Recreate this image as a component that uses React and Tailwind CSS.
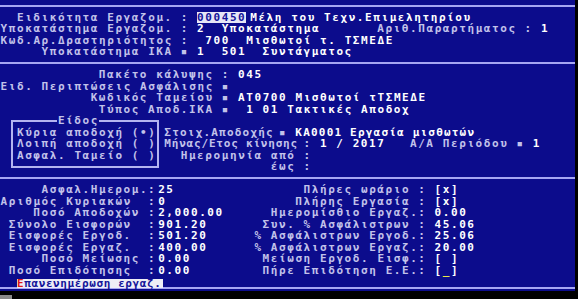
const L = "text-[#c2c2ea]";
const V = "text-white";
const BG = "bg-[#0c0c8c]";

const COL = [
  "col-start-1", "col-start-2", "col-start-3", "col-start-4", "col-start-5", "col-start-6", "col-start-7", "col-start-8", "col-start-9", "col-start-10",
  "col-start-11", "col-start-12", "col-start-13", "col-start-14", "col-start-15", "col-start-16", "col-start-17", "col-start-18", "col-start-19", "col-start-20",
  "col-start-21", "col-start-22", "col-start-23", "col-start-24", "col-start-25", "col-start-26", "col-start-27", "col-start-28", "col-start-29", "col-start-30",
  "col-start-31", "col-start-32", "col-start-33", "col-start-34", "col-start-35", "col-start-36", "col-start-37", "col-start-38", "col-start-39", "col-start-40",
  "col-start-41", "col-start-42", "col-start-43", "col-start-44", "col-start-45", "col-start-46", "col-start-47", "col-start-48", "col-start-49", "col-start-50",
  "col-start-51", "col-start-52", "col-start-53", "col-start-54", "col-start-55", "col-start-56", "col-start-57", "col-start-58", "col-start-59", "col-start-60",
  "col-start-61", "col-start-62", "col-start-63", "col-start-64", "col-start-65", "col-start-66", "col-start-67", "col-start-68", "col-start-69", "col-start-70",
];

// one text-mode line: [column, text, classes]
function Row({ items = [] }) {
  return (
    <div className="grid grid-cols-[repeat(70,8.2px)] h-[11.5px] leading-[11.5px]">
      {items.map(([c, text, cls], i) => (
        <span key={i} className={`row-start-1 w-max whitespace-pre pl-[0.6px] ${COL[c]} ${cls}`}>
          {text}
        </span>
      ))}
    </div>
  );
}

function Sep() {
  return (
    <div className="h-[11.5px] flex items-center">
      <div className="h-[2px] w-full bg-[#a6a6f2]" />
    </div>
  );
}

const SQ = "▪";
const tight = "tracking-[1.2px]";

const top = [
  [[2, "Ειδικότητα Εργαζομ.", L], [22, ":", L], [24, "000450", "bg-[#e6e6f6] text-[#14149a]"], [30, "Μέλη του Τεχν.Επιμελητηρίου", `${V} ml-[4px]`]],
  [[0, "Υποκατάστημα Εργαζομ.", L], [22, ":", L], [24, "2", V], [27, "Υποκατάστημα", V], [46, "Αριθ.Παραρτήματος", L], [64, ":", L], [66, "1", V]],
  [[0, "Κωδ.Αρ.Δραστηριότητος", L], [22, ":", L], [25, "700", V], [30, "Μισθωτοί τ. ΤΣΜΕΔΕ", V]],
  [[5, "Υποκατάστημα ΙΚΑ", L], [22, SQ, L], [24, "1", V], [27, "501", V], [32, "Συντάγματος", V]],
];

const mid = [
  [[12, "Πακέτο κάλυψης", L], [27, ":", L], [29, "045", V]],
  [[0, "Ειδ. Περιπτώσεις Ασφάλισης", L], [27, SQ, L]],
  [[11, "Κωδικός Ταμείου", L], [27, SQ, L], [29, "ΑΤ0700 Μισθωτοί τΤΣΜΕΔΕ", V]],
  [[12, "Τύπος Αποδ.ΙΚΑ", L], [27, SQ, L], [30, "1 01 Τακτικές Αποδοχ", V]],
];

const boxRows = [
  [[7, "Είδος", `${L} ${BG} relative`]],
  [[2, "Κύρια αποδοχή (•)", L], [20, "Στοιχ.Αποδοχής", `${L} ${tight}`], [34, SQ, L], [36, "ΚΑ0001 Εργασία μισθωτών", `${V} ${tight}`]],
  [[2, "Λοιπή αποδοχή ( )", L], [20, "Μήνας/Ετος κίνησης", `${L} tracking-[0.8px]`], [37, ":", L], [39, "1", V], [41, "/", V], [43, "2017", V], [50, "Α/Α Περιόδου", L], [63, SQ, L], [65, "1", V]],
  [[2, "Ασφαλ. Ταμείο ( )", L], [22, "Ημερομηνία από", L], [37, ":", L]],
  [[33, "έως", L], [37, ":", L]],
];

const bottom = [
  [[5, "Ασφαλ.Ημερομ.", L], [18, ":", L], [19, "25", `${V} ml-[2px]`], [37, "Πλήρες ωράριο", L], [51, ":", L], [53, "[x]", V]],
  [[0, "Αριθμός Κυριακών", L], [18, ":", L], [19, "0", `${V} ml-[2px]`], [36, "Πλήρης Εργασία", L], [51, ":", L], [53, "[x]", V]],
  [[4, "Ποσό Αποδοχών", L], [18, ":", L], [19, "2,000.00", `${V} ml-[2px]`], [33, "Ημερομίσθιο Εργαζ.", L], [51, ":", L], [53, "0.00", V]],
  [[1, "Σύνολο Εισφορών", L], [18, ":", L], [19, "901.20", `${V} ml-[2px]`], [32, "Συν. % Ασφάλιστρων", L], [51, ":", L], [53, "45.06", V]],
  [[1, "Εισφορές Εργοδ.", L], [18, ":", L], [19, "501.20", `${V} ml-[2px]`], [31, "% Ασφάλιστρων Εργοδ.", L], [51, ":", L], [53, "25.06", V]],
  [[1, "Εισφορές Εργαζ.", L], [18, ":", L], [19, "400.00", `${V} ml-[2px]`], [31, "% Ασφάλιστρων Εργαζ.", L], [51, ":", L], [53, "20.00", V]],
  [[5, "Ποσό Μείωσης", L], [18, ":", L], [19, "0.00", `${V} ml-[2px]`], [32, "Μείωση Εργοδ. Εισφ.", L], [51, ":", L], [53, "[ ]", V]],
  [[1, "Ποσό Επιδότησης", L], [18, ":", L], [19, "0.00", `${V} ml-[2px]`], [32, "Πήρε Επιδότηση Ε.Ε.", L], [51, ":", L], [53, "[", V], [54, "_", "text-[#e8e84a]"], [55, "]", V]],
];

export default function App() {
  return (
    <div className="w-[578px] h-[299px] bg-black overflow-hidden font-['DejaVu_Sans_Mono',monospace] font-bold text-[11px] tracking-[1.58px]">
      <div className={`w-[575px] ${BG}`}>
        <Sep />
        {top.map((r, i) => <Row key={i} items={r} />)}
        <Sep />
        {mid.map((r, i) => <Row key={i} items={r} />)}
        <div className="relative">
          <div className="absolute left-[11px] top-[5px] w-[148px] h-[48px] border-2 border-[#b4b4f0]" />
          {boxRows.map((r, i) => <Row key={i} items={r} />)}
        </div>
        <Sep />
        {bottom.map((r, i) => <Row key={i} items={r} />)}
        <div className="relative h-[11.5px]">
          <div className="absolute left-0 right-0 top-[8px] h-[2px] bg-[#a6a6f2]" />
          <div className="absolute left-[17px] top-0 w-[146px] h-px bg-[#c8c8f0]" />
          <div className="relative ml-[17px] mt-[3px] w-fit h-[9px] leading-[9px] bg-[#eeeef6] text-[#14149a] tracking-[0.6px] pr-[2px]">
            <span className="text-[#e01818]">Ε</span>πανενημέρωση εργαζ.
          </div>
        </div>
      </div>
      <div className="flex pt-[4px]">
        <div className="w-[12px] h-[7px] bg-[#8a8a8a]" />
      </div>
    </div>
  );
}
